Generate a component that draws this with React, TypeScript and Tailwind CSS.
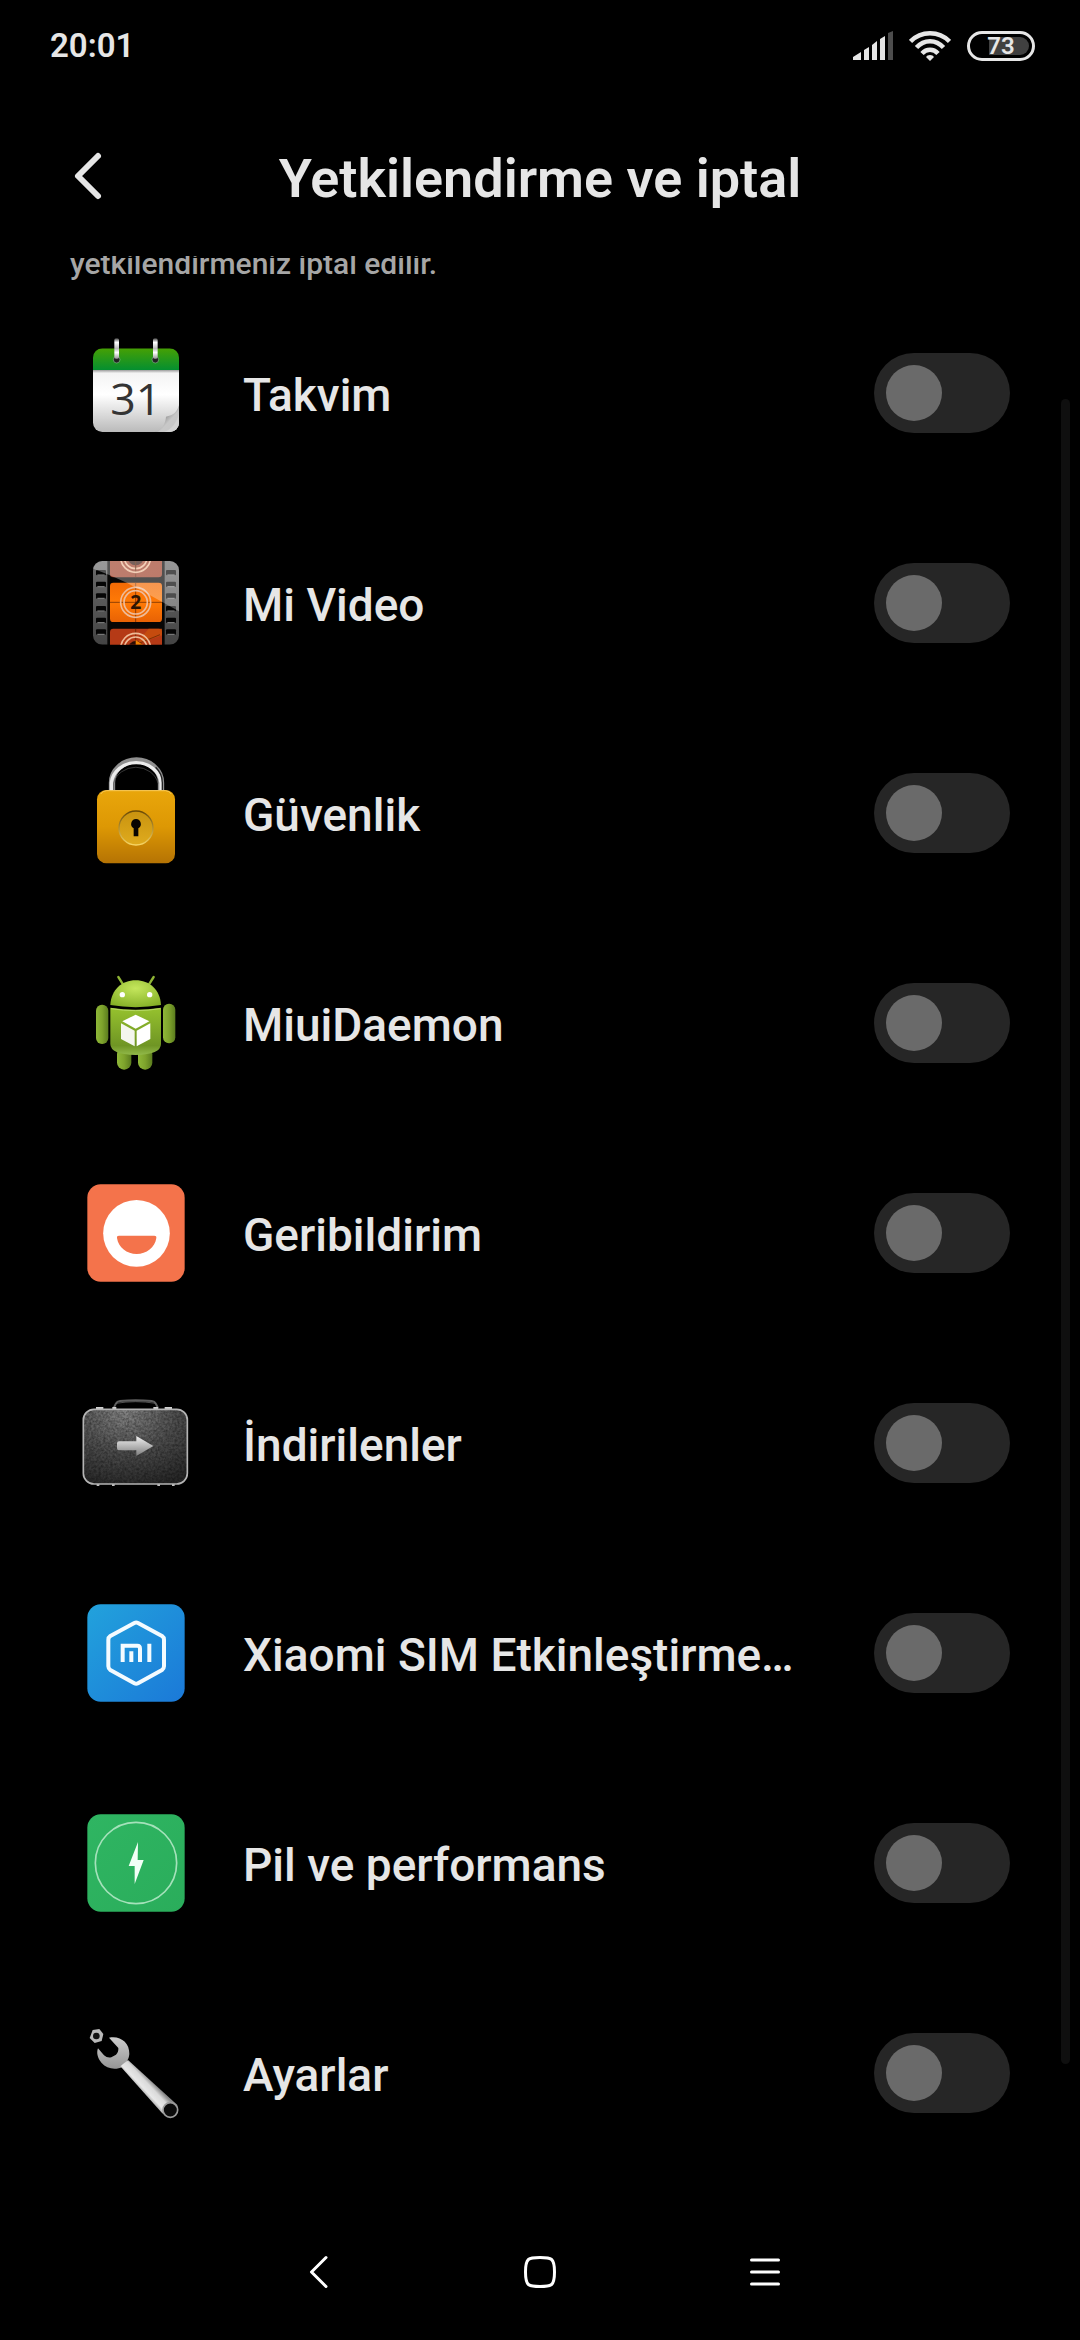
import { useState, type ReactNode } from "react";

function AppIcon({ viewBox = "18 9 360 360", children }: { viewBox?: string; children: ReactNode }) {
  return (
    <svg viewBox={viewBox} className="size-[120px] shrink-0" aria-hidden="true">
      {children}
    </svg>
  );
}

function CalendarIcon() {
  return (
    <AppIcon viewBox="18 39 360 360">
      <defs>
        <linearGradient id="calPaper" x1="0" y1="0" x2="0" y2="1">
          <stop offset="0" stopColor="#8a8a8a" />
          <stop offset="0.06" stopColor="#f4f4f4" />
          <stop offset="0.4" stopColor="#ffffff" />
          <stop offset="1" stopColor="#b9b9b9" />
        </linearGradient>
        <linearGradient id="calTop" x1="0" y1="0" x2="0" y2="1">
          <stop offset="0" stopColor="#46a004" />
          <stop offset="1" stopColor="#048f30" />
        </linearGradient>
        <linearGradient id="calCurl" x1="0" y1="0" x2="1" y2="1">
          <stop offset="0" stopColor="#8b8b8b" />
          <stop offset="0.45" stopColor="#a0a0a0" />
          <stop offset="0.6" stopColor="#c8c8c8" />
          <stop offset="1" stopColor="#c4c4c4" />
        </linearGradient>
        <linearGradient id="calRing" x1="0" y1="0" x2="0" y2="1">
          <stop offset="0" stopColor="#444" />
          <stop offset="0.2" stopColor="#fff" />
          <stop offset="0.5" stopColor="#bbb" />
          <stop offset="0.7" stopColor="#fff" />
          <stop offset="1" stopColor="#999" />
        </linearGradient>
        <clipPath id="calClip">
          <rect x="69" y="85" width="258" height="251" rx="28" />
        </clipPath>
      </defs>
      <g clipPath="url(#calClip)">
        <rect x="69" y="148" width="258" height="190" fill="url(#calPaper)" />
        <rect x="69" y="85" width="258" height="65" fill="url(#calTop)" />
        <path d="M327 256C318 286 300 287 288 290C286 312 278 328 254 336H327Z" fill="url(#calCurl)" />
        <path d="M327 280C322 305 305 330 282 336H327Z" fill="#d2d2d2" />
      </g>
      <circle cx="140" cy="119" r="10" fill="#222" stroke="#7fc08a" strokeWidth="2" />
      <circle cx="256" cy="119" r="10" fill="#222" stroke="#7fc08a" strokeWidth="2" />
      <rect x="133" y="55" width="14" height="61" rx="5" fill="url(#calRing)" />
      <rect x="249" y="55" width="14" height="61" rx="5" fill="url(#calRing)" />
      <text x="197" y="286" fontSize="134" textAnchor="middle" fill="#343434" fontFamily='"Open Sans", "Noto Sans", sans-serif'>
        31
      </text>
    </AppIcon>
  );
}

const HOLES = [97, 132, 167, 205, 240, 275];

function VideoIcon() {
  return (
    <AppIcon>
      <defs>
        <linearGradient id="filmSide" x1="0" y1="0" x2="0" y2="1">
          <stop offset="0" stopColor="#6a6a6a" />
          <stop offset="1" stopColor="#444444" />
        </linearGradient>
        <linearGradient id="filmMid" x1="0" y1="0" x2="0" y2="1">
          <stop offset="0" stopColor="#f26a05" />
          <stop offset="0.5" stopColor="#ff7a06" />
          <stop offset="1" stopColor="#e86205" />
        </linearGradient>
        <linearGradient id="filmGloss" x1="0" y1="0" x2="1" y2="1">
          <stop offset="0" stopColor="#fff" stopOpacity="0.32" />
          <stop offset="1" stopColor="#fff" stopOpacity="0.28" />
        </linearGradient>
        <clipPath id="filmClip">
          <rect x="69" y="63" width="258" height="251" rx="28" />
        </clipPath>
      </defs>
      <g clipPath="url(#filmClip)">
        <rect x="69" y="63" width="258" height="251" fill="#070605" />
        <rect x="69" y="63" width="43" height="251" fill="url(#filmSide)" />
        <rect x="284" y="63" width="43" height="251" fill="url(#filmSide)" />
        {HOLES.map((y) => (
          <g key={y}>
            <rect x="78" y={y - 7} width="30" height="16" rx="3" fill="#050505" />
            <rect x="288" y={y - 7} width="30" height="16" rx="3" fill="#050505" />
            <path d={`M82 ${y + 8}h22M292 ${y + 8}h22`} stroke="#8c8c8c" strokeWidth="3" />
          </g>
        ))}
        <rect x="120" y="40" width="156" height="72" rx="10" fill="#a0432c" />
        <rect x="120" y="128" width="156" height="118" rx="10" fill="url(#filmMid)" />
        <rect x="120" y="266" width="156" height="70" rx="10" fill="#b53a16" />
        <path d="M196 314L276 286V266H236Z" fill="#c9500c" opacity="0.8" />
        <path d="M120 187H276M197 128V246M197 63V112M197 266V314M197 314L270 284" stroke="#5a2203" strokeWidth="2" />
        <g fill="none" stroke="#eebb98" strokeWidth="5">
          <circle cx="197" cy="187" r="45" />
          <circle cx="197" cy="187" r="35" />
          <circle cx="197" cy="52" r="45" />
          <circle cx="197" cy="52" r="34" />
          <circle cx="197" cy="325" r="45" />
          <circle cx="197" cy="325" r="34" />
        </g>
        <circle cx="197" cy="52" r="24" fill="#3a1a12" />
        <path d="M197 63V90" stroke="#5a2203" strokeWidth="3" />
        <circle cx="197" cy="325" r="22" fill="#2a0d04" />
        <path d="M197 300l22 14h-22z" fill="#f08000" />
        <text
          x="197"
          y="207"
          fontSize="58"
          fontWeight="700"
          textAnchor="middle"
          fill="#2e1503"
          fontFamily='"Open Sans", "Noto Sans", sans-serif'
        >
          2
        </text>
        <path d="M69 63H327V214Q250 170 170 128Q110 100 69 86Z" fill="url(#filmGloss)" />
      </g>
    </AppIcon>
  );
}

function LockIcon() {
  return (
    <AppIcon viewBox="18 39 360 360">
      <defs>
        <linearGradient id="lockBody" x1="0" y1="0" x2="0" y2="1">
          <stop offset="0" stopColor="#e9a60b" />
          <stop offset="0.5" stopColor="#dd9804" />
          <stop offset="1" stopColor="#b57304" />
        </linearGradient>
        <linearGradient id="lockPlate" x1="0" y1="0" x2="0" y2="1">
          <stop offset="0" stopColor="#c9930f" />
          <stop offset="1" stopColor="#dfab1e" />
        </linearGradient>
        <linearGradient id="lockRim" x1="0" y1="0" x2="0" y2="1">
          <stop offset="0" stopColor="#6b4a04" />
          <stop offset="1" stopColor="#f7d564" />
        </linearGradient>
      </defs>
      <path d="M126 156V128a73 66 0 0 1 147 0V156" fill="none" stroke="#8f8f8f" strokeWidth="19" />
      <path d="M124 156V128a75 68 0 0 1 149 0V156" fill="none" stroke="#ececec" strokeWidth="10" />
      <path d="M131 156V130a68 61 0 0 1 133 0" fill="none" stroke="#555" strokeWidth="2" />
      <path d="M277 156V128a78 70 0 0 0-20-46" fill="none" stroke="#222" strokeWidth="4" />
      <rect x="81" y="150" width="234" height="220" rx="28" fill="url(#lockBody)" />
      <path d="M92 162Q98 152 110 152H286Q298 152 304 162" fill="none" stroke="#f6c95c" strokeWidth="3" />
      <circle cx="198" cy="264" r="51" fill="url(#lockPlate)" stroke="url(#lockRim)" strokeWidth="4" />
      <path d="M198 237a15 15 0 0 1 7 28v24h-14v-24a15 15 0 0 1 7-28z" fill="#080502" />
    </AppIcon>
  );
}

function AndroidIcon() {
  return (
    <AppIcon>
      <defs>
        <radialGradient id="droidHead" cx="0.5" cy="0.3" r="0.75">
          <stop offset="0" stopColor="#c4e65c" />
          <stop offset="1" stopColor="#84b026" />
        </radialGradient>
        <linearGradient id="droidBody" x1="0" y1="0" x2="0" y2="1">
          <stop offset="0" stopColor="#96c22e" />
          <stop offset="0.8" stopColor="#6f9524" />
          <stop offset="1" stopColor="#92b94a" />
        </linearGradient>
        <linearGradient id="droidLimb" x1="0" y1="0" x2="1" y2="0">
          <stop offset="0" stopColor="#8fb838" />
          <stop offset="0.5" stopColor="#7ea32c" />
          <stop offset="1" stopColor="#5b7c1e" />
        </linearGradient>
      </defs>
      <path d="M145 51L159 73M251 51L237 73" stroke="#8fb535" strokeWidth="7" strokeLinecap="round" />
      <rect x="141" y="262" width="43" height="67" rx="21" fill="url(#droidLimb)" />
      <rect x="204" y="262" width="43" height="67" rx="21" fill="url(#droidLimb)" />
      <rect x="78" y="134" width="37" height="118" rx="18" fill="url(#droidLimb)" />
      <rect x="279" y="131" width="37" height="119" rx="18" fill="url(#droidLimb)" />
      <path d="M121 135C124 88 156 61 197 61S270 88 273 135Q197 148 121 135Z" fill="url(#droidHead)" />
      <path d="M121 143Q197 155 273 143V252Q273 283 197 285Q121 283 121 252Z" fill="url(#droidBody)" />
      <path d="M123 146Q197 158 271 146" fill="none" stroke="#b6d964" strokeWidth="3" />
      <circle cx="157" cy="104" r="8" fill="#fff" />
      <circle cx="239" cy="104" r="8" fill="#fff" />
      <path d="M197 164L238 184L197 206L157 184Z" fill="#fff" />
      <path d="M153 190L194 212V259L153 237Z" fill="#f4f6ee" />
      <path d="M241 190L200 212V259L241 237Z" fill="#fff" />
    </AppIcon>
  );
}

function FeedbackIcon() {
  return (
    <AppIcon>
      <rect x="52" y="43" width="292" height="292" rx="40" fill="#f4734b" />
      <circle cx="199.500" cy="190" r="100" fill="#fff" />
      <path d="M147 197H253Q260 197 259 204C255 233 229 252 200 252S145 233 141 204Q140 197 147 197Z" fill="#f4734b" />
    </AppIcon>
  );
}

function BriefcaseIcon() {
  return (
    <AppIcon>
      <defs>
        <radialGradient id="caseBody" cx="0.4" cy="0.05" r="1">
          <stop offset="0" stopColor="#858585" />
          <stop offset="0.5" stopColor="#505050" />
          <stop offset="1" stopColor="#282828" />
        </radialGradient>
        <linearGradient id="caseArrow" x1="0" y1="0" x2="0" y2="1">
          <stop offset="0" stopColor="#f2f2f2" />
          <stop offset="1" stopColor="#7d7d7d" />
        </linearGradient>
        <filter id="caseGrain" x="0" y="0" width="1" height="1">
          <feTurbulence type="fractalNoise" baseFrequency="0.14" numOctaves="2" />
          <feColorMatrix values="0 0 0 0 0  0 0 0 0 0  0 0 0 0 0  1.2 0 0 0 -0.35" />
          <feComposite in2="SourceGraphic" operator="in" />
        </filter>
      </defs>
      <path d="M130 86L138 70Q141 64 150 63Q197 58 245 63Q254 64 257 70L265 86" fill="none" stroke="#5e5e5e" strokeWidth="6" />
      <path d="M138 70Q197 60 257 70" fill="none" stroke="#777" strokeWidth="2" />
      <path d="M78 84h22M284 84h22M127 84h12M250 84h14" stroke="#d0d0d0" strokeWidth="6" />
      <path d="M80 315h8M126 315h8M262 315h8M306 315h8" stroke="#bbb" strokeWidth="6" />
      <rect x="40" y="88" width="312" height="224" rx="32" fill="url(#caseBody)" />
      <rect x="40" y="88" width="312" height="224" rx="32" fill="#000" filter="url(#caseGrain)" opacity="0.6" />
      <rect x="40" y="88" width="312" height="224" rx="32" fill="none" stroke="#b4b4b4" strokeWidth="5" />
      <path d="M147 184H199V168L250 198L199 228V211H147Q141 211 141 205V190Q141 184 147 184Z" fill="url(#caseArrow)" />
    </AppIcon>
  );
}

function MiSimIcon() {
  return (
    <AppIcon>
      <defs>
        <linearGradient id="simBg" x1="0" y1="0" x2="1" y2="1">
          <stop offset="0" stopColor="#22a2dc" />
          <stop offset="1" stopColor="#1b79d8" />
        </linearGradient>
      </defs>
      <rect x="52" y="43" width="292" height="292" rx="40" fill="url(#simBg)" />
      <path
        d="M193 99Q198.500 96 204 99L276 138Q282 142 282 149V229Q282 236 276 240L204 280Q198.500 283 193 280L121 240Q115 236 115 229V149Q115 142 121 138Z"
        fill="none"
        stroke="#f4fbff"
        strokeWidth="12"
        strokeLinejoin="round"
      />
      <path d="M158 216V167H202Q210 167 210 176V216M184 184V216M238 161V216" fill="none" stroke="#f4fbff" strokeWidth="12" />
    </AppIcon>
  );
}

function BatteryAppIcon() {
  return (
    <AppIcon>
      <defs>
        <linearGradient id="powerBg" x1="0" y1="0" x2="1" y2="1">
          <stop offset="0" stopColor="#2fb562" />
          <stop offset="1" stopColor="#2aad5b" />
        </linearGradient>
      </defs>
      <rect x="52" y="43" width="292" height="292" rx="40" fill="url(#powerBg)" />
      <circle cx="198" cy="189" r="122" fill="none" stroke="#a5e2bb" strokeWidth="5" />
      <path d="M204 126L176 198H194V252L221 180H203Z" fill="#f2fff6" />
    </AppIcon>
  );
}

function WrenchIcon() {
  return (
    <AppIcon viewBox="18 639 360 360">
      <defs>
        <linearGradient id="wrHead" x1="0" y1="0" x2="0" y2="1">
          <stop offset="0" stopColor="#cccccc" />
          <stop offset="1" stopColor="#969696" />
        </linearGradient>
        <linearGradient id="wrBar" gradientUnits="userSpaceOnUse" x1="212" y1="876" x2="246" y2="844">
          <stop offset="0" stopColor="#9a9a9a" />
          <stop offset="0.3" stopColor="#e8e8e8" />
          <stop offset="0.7" stopColor="#dadada" />
          <stop offset="1" stopColor="#8a8a8a" />
        </linearGradient>
      </defs>
      <path d="M68 690L88 687L100 702L95 723L74 729L59 714Z" fill="#b9b9b9" />
      <circle cx="79" cy="708" r="10" fill="#111" />
      <path
        d="M117 713C150 706 179 727 178 762C177 772 175 777 171 783L158 800C138 811 110 807 95 789C82 775 79 757 84 745L102 766Q112 775 124 772L138 764Q146 757 145 744Z"
        fill="url(#wrHead)"
      />
      <path d="M151 799L174 780L322 915A27 27 0 0 1 276 939Z" fill="url(#wrBar)" />
      <circle cx="301" cy="930" r="22" fill="#0b0b0b" stroke="#9b9b9b" strokeWidth="5" />
    </AppIcon>
  );
}

const APPS = [
  { id: "takvim", name: "Takvim", icon: <CalendarIcon /> },
  { id: "mi-video", name: "Mi Video", icon: <VideoIcon /> },
  { id: "guvenlik", name: "Güvenlik", icon: <LockIcon /> },
  { id: "miui-daemon", name: "MiuiDaemon", icon: <AndroidIcon /> },
  { id: "geribildirim", name: "Geribildirim", icon: <FeedbackIcon /> },
  { id: "indirilenler", name: "İndirilenler", icon: <BriefcaseIcon /> },
  { id: "xiaomi-sim", name: "Xiaomi SIM Etkinleştirme…", icon: <MiSimIcon /> },
  { id: "pil", name: "Pil ve performans", icon: <BatteryAppIcon /> },
  { id: "ayarlar", name: "Ayarlar", icon: <WrenchIcon /> },
];

function StatusBar() {
  return (
    <div className="flex h-[92px] items-center justify-between pr-[45px] pl-[50px]">
      <span className="text-[33px] leading-10 font-semibold">20:01</span>
      <div className="flex items-center gap-4">
        <svg viewBox="0 0 40 30" className="h-[30px] w-10" fill="#e6e6e6" aria-hidden="true">
          <path d="M0 26L8 21V29H0ZM11 19L16 16V29H11ZM19 14L24 10V29H19ZM27 8L32 5V29H27Z" />
          <path d="M35 2L40 0V29H35Z" fill="#4d4d4d" />
        </svg>
        <svg viewBox="0 0 42 30" className="h-[30px] w-[42px]" fill="none" stroke="#e6e6e6" strokeWidth="4.500" aria-hidden="true">
          <path d="M1.500 10.500C12 -0.500 30 -0.500 40.500 10.500M7.500 16.500C15 8 27 8 34.500 16.500M13 22.500C17.500 17.500 24.500 17.500 29 22.500" />
          <path d="M21 24a4.500 3 0 0 1 4 2l-4 4-4-4a4.500 3 0 0 1 4-2z" fill="#e6e6e6" stroke="none" />
        </svg>
        <div className="relative flex h-[30px] w-[68px] items-center justify-center rounded-full border-3 border-[#e6e6e6]">
          <span className="absolute top-[3px] right-[3px] bottom-[3px] w-10 rounded-r-full bg-[#404040]" />
          <span className="relative text-2xl leading-6 font-semibold">73</span>
        </div>
      </div>
    </div>
  );
}

export default function App() {
  const [enabled, setEnabled] = useState<Record<string, boolean>>({});

  return (
    <div className="flex min-h-screen flex-col bg-black font-['Roboto',sans-serif] text-[#e6e6e6]">
      <StatusBar />
      <header className="relative flex h-[164px] items-center justify-center pt-1">
        <button type="button" aria-label="Geri" className="absolute left-[58px] flex size-[60px] items-center justify-center">
          <svg viewBox="0 0 60 60" className="size-full" fill="none" stroke="#e6e6e6" strokeWidth="6" strokeLinecap="round" strokeLinejoin="round" aria-hidden="true">
            <path d="M40 10L20 30L40 50" />
          </svg>
        </button>
        <h1 className="pt-1.5 text-[54px] leading-[64px] font-semibold">Yetkilendirme ve iptal</h1>
      </header>

      <main className="relative flex-1">
        <div className="flex h-8 items-end overflow-hidden px-[70px] pb-1.5">
          <p className="text-[30px] leading-9 font-medium text-[#a6a6a6]">yetkilendirmeniz iptal edilir.</p>
        </div>
        <ul>
          {APPS.map((app) => (
            <li key={app.id}>
              <label htmlFor={app.id} className="flex h-[210px] items-center pr-[70px] pl-[76px]">
                {app.icon}
                <span className="ml-[47px] min-w-0 flex-1 truncate pt-1 text-[46px] leading-[60px] font-medium">{app.name}</span>
                <input
                  id={app.id}
                  type="checkbox"
                  role="switch"
                  checked={!!enabled[app.id]}
                  onChange={(e) => setEnabled({ ...enabled, [app.id]: e.target.checked })}
                  className="ml-8 flex h-20 w-34 shrink-0 cursor-pointer appearance-none items-center rounded-full bg-[#262626] px-3 before:size-14 before:rounded-full before:bg-[#6a6a6a] checked:justify-end checked:bg-blue-600 checked:before:bg-white"
                />
              </label>
            </li>
          ))}
        </ul>
        <div className="absolute top-[143px] right-[10px] bottom-[140px] w-[9px] rounded-full bg-[#0f0f0f]" />
      </main>

      <nav className="mx-auto grid h-[136px] w-[675px] grid-cols-3 place-items-center" aria-label="Sistem gezinmesi">
        <button type="button" aria-label="Geri">
          <svg viewBox="0 0 48 48" className="size-12" fill="none" stroke="#fff" strokeWidth="3" strokeLinecap="round" strokeLinejoin="round" aria-hidden="true">
            <path d="M35 9.500L20.500 24L35 38.500" />
          </svg>
        </button>
        <button type="button" aria-label="Ana ekran">
          <svg viewBox="0 0 48 48" className="size-12" fill="none" stroke="#fff" strokeWidth="3" aria-hidden="true">
            <path d="M24 9.500C35.500 9.500 38.500 10 38.500 24S35.500 38.500 24 38.500S9.500 38 9.500 24S12.500 9.500 24 9.500Z" />
          </svg>
        </button>
        <button type="button" aria-label="Son uygulamalar">
          <svg viewBox="0 0 48 48" className="size-12" stroke="#fff" strokeWidth="3" strokeLinecap="round" aria-hidden="true">
            <path d="M10.500 12H37.500M10.500 24H37.500M10.500 36H37.500" />
          </svg>
        </button>
      </nav>
    </div>
  );
}
